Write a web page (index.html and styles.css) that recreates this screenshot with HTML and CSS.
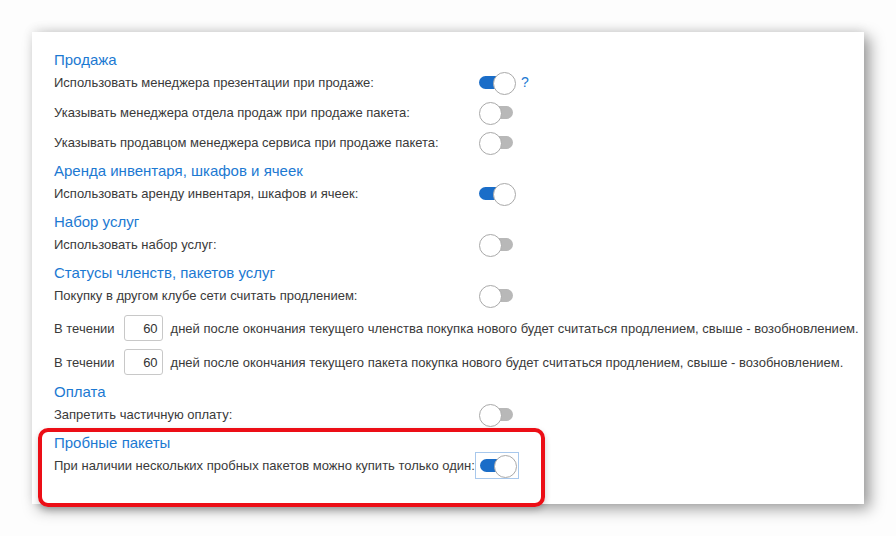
FILE: index.html
```
<!DOCTYPE html>
<html lang="ru">
<head>
    <meta charset="UTF-8">
    <meta name="viewport" content="width=device-width, initial-scale=1.0">
    <title>Настройки</title>
    <link rel="stylesheet" href="styles.css">
</head>
<body>
    <div class="card">
        <!-- Продажа -->
        <section class="section">
            <h3 class="section-title">Продажа</h3>
            <div class="row">
                <span class="label">Использовать менеджера презентации при продаже:</span>
                <span class="switch on"></span>
                <span class="hint">?</span>
            </div>
            <div class="row">
                <span class="label">Указывать менеджера отдела продаж при продаже пакета:</span>
                <span class="switch"></span>
            </div>
            <div class="row">
                <span class="label">Указывать продавцом менеджера сервиса при продаже пакета:</span>
                <span class="switch"></span>
            </div>
        </section>

        <!-- Аренда -->
        <section class="section">
            <h3 class="section-title">Аренда инвентаря, шкафов и ячеек</h3>
            <div class="row">
                <span class="label">Использовать аренду инвентаря, шкафов и ячеек:</span>
                <span class="switch on"></span>
            </div>
        </section>

        <!-- Набор услуг -->
        <section class="section">
            <h3 class="section-title">Набор услуг</h3>
            <div class="row">
                <span class="label">Использовать набор услуг:</span>
                <span class="switch"></span>
            </div>
        </section>

        <!-- Статусы -->
        <section class="section">
            <h3 class="section-title">Статусы членств, пакетов услуг</h3>
            <div class="row">
                <span class="label">Покупку в другом клубе сети считать продлением:</span>
                <span class="switch"></span>
            </div>
            <div class="row row-input">
                <span>В течении</span>
                <input class="days" type="text" value="60">
                <span>дней после окончания текущего членства покупка нового будет считаться продлением, свыше - возобновлением.</span>
            </div>
            <div class="row row-input">
                <span>В течении</span>
                <input class="days" type="text" value="60">
                <span>дней после окончания текущего пакета покупка нового будет считаться продлением, свыше - возобновлением.</span>
            </div>
        </section>

        <!-- Оплата -->
        <section class="section">
            <h3 class="section-title">Оплата</h3>
            <div class="row">
                <span class="label">Запретить частичную оплату:</span>
                <span class="switch"></span>
            </div>
        </section>

        <!-- Пробные пакеты -->
        <section class="section">
            <h3 class="section-title">Пробные пакеты</h3>
            <div class="row">
                <span class="label label-tight">При наличии нескольких пробных пакетов можно купить только один:</span>
                <span class="switch-focus"><span class="switch on"></span></span>
            </div>
        </section>

        <div class="highlight"></div>
    </div>
</body>
</html>
```

FILE: styles.css
```
* {
    margin: 0;
    padding: 0;
    box-sizing: border-box;
}

body {
    font-family: 'Liberation Sans', Arial, sans-serif;
    font-size: 13px;
    color: #3a3a3a;
    background-color: #fdfdfd;
    width: 896px;
    height: 536px;
    overflow: hidden;
    padding: 32px 0 0 32px;
}

/* Card */
.card {
    position: relative;
    width: 832px;
    height: 472px;
    background-color: #fff;
    padding: 17px 0 0 22px;
    box-shadow: 6px 5px 14px rgba(0, 0, 0, 0.38), 0 -3px 10px rgba(0, 0, 0, 0.07);
}

/* Sections */
.section {
    display: flex;
    flex-direction: column;
    gap: 8px;
}

.section + .section {
    margin-top: 7px;
}

.section-title {
    font-size: 15px;
    font-weight: normal;
    color: #1c79d2;
    height: 22px;
    line-height: 22px;
    margin-bottom: -8px;
}

/* Rows */
.row {
    display: flex;
    align-items: center;
    height: 22px;
    white-space: nowrap;
}

.label {
    width: 425px;
}

.label-tight {
    width: 421px;
}

.hint {
    color: #1c79d2;
    font-size: 14px;
    margin-left: 7px;
}

.row-input {
    height: 26px;
    margin-top: 1px;
}

.row-input + .row-input {
    margin-top: 0;
}

.row-input:last-child {
    margin-bottom: -1px;
}

.days {
    width: 39px;
    height: 26px;
    margin: 0 8px 0 9px;
    border: 1px solid #c8c8c8;
    border-radius: 3px;
    font-family: inherit;
    font-size: 13px;
    color: #333;
    text-align: right;
    padding-right: 4px;
}

/* Switch */
.switch {
    position: relative;
    display: inline-block;
    width: 35px;
    height: 21px;
}

.switch::before {
    content: '';
    position: absolute;
    left: 5px;
    right: 1px;
    top: 4px;
    height: 13px;
    border-radius: 7px;
    background-color: #b8b8b8;
}

.switch::after {
    content: '';
    position: absolute;
    left: 0;
    top: 0;
    width: 21px;
    height: 21px;
    border-radius: 50%;
    background-color: #fff;
    border: 1px solid #a9a9a9;
}

.switch.on::before {
    left: 0;
    right: 6px;
    background-color: #1a6dc8;
}

.switch.on::after {
    left: 14px;
}

.switch-focus {
    display: inline-flex;
    align-items: center;
    justify-content: center;
    width: 44px;
    height: 27px;
    border: 1px solid #a8c8ec;
}

/* Red annotation frame */
.highlight {
    position: absolute;
    left: 6px;
    top: 396px;
    width: 507px;
    height: 79px;
    border: 4px solid #ec0e16;
    border-radius: 10px;
    box-shadow: 0 3px 6px rgba(0, 0, 0, 0.2);
}
```
